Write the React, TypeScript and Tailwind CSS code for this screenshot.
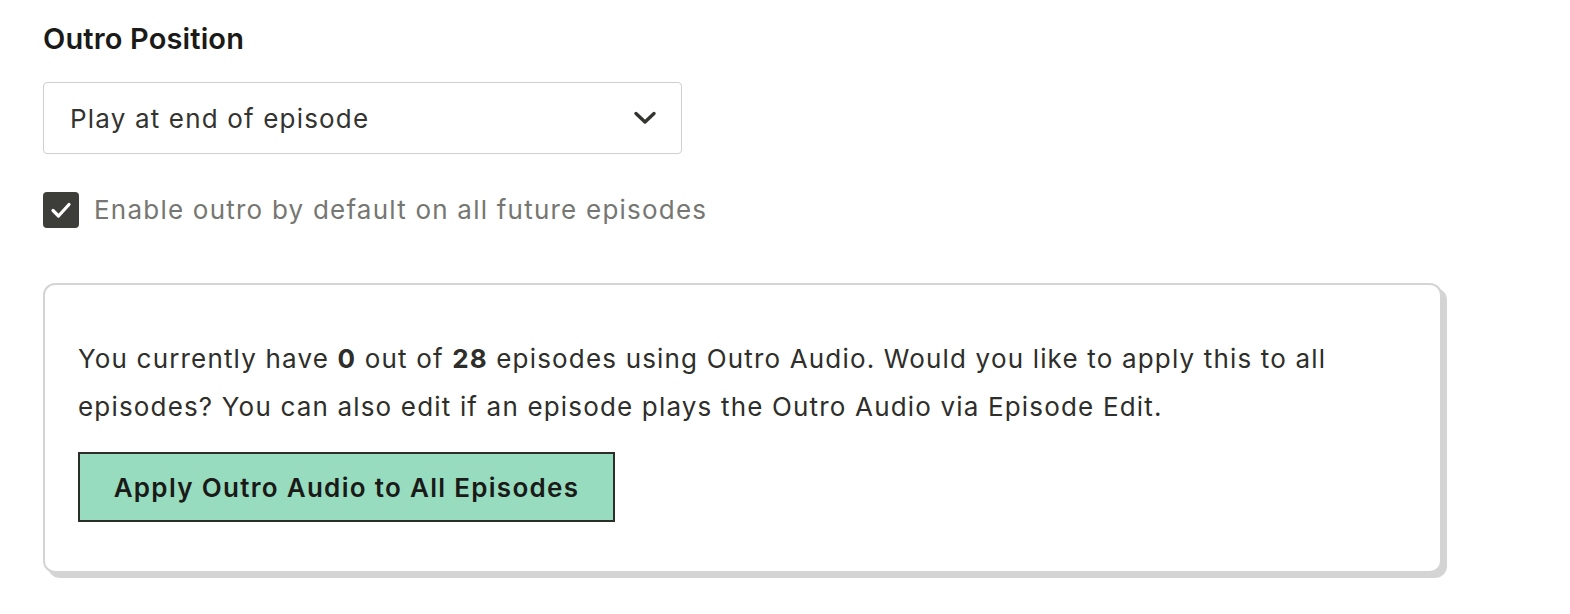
import React from "react";

export default function App() {
  return (
    <div
      className="w-[1570px] h-[614px] bg-white pl-[43px] pt-[21px] text-[#2e2e2b]"
      style={{ fontFamily: 'Inter, "Liberation Sans", Arial, sans-serif' }}
    >
      <h2 className="text-[29px] font-semibold leading-[36px] text-[#1a1a18] tracking-[0.005em]">Outro Position</h2>

      <div className="mt-[25px] w-[639px] h-[72px] border border-[#cfcfcf] rounded-[4px] flex items-center justify-between pl-[26px] pr-[24px]">
        <span className="text-[26px] text-[#333330] tracking-[0.045em]">Play at end of episode</span>
        <svg width="24" height="16" viewBox="0 0 24 16" fill="none">
          <path d="M3 3.5 L12 12 L21 3.5" stroke="#333330" strokeWidth="3.4" strokeLinecap="round" strokeLinejoin="round" />
        </svg>
      </div>

      <label className="mt-[38px] flex items-center gap-[15px] h-[36px]">
        <span className="w-[36px] h-[36px] rounded-[4px] bg-[#3d3d39] flex items-center justify-center">
          <svg width="22" height="18" viewBox="0 0 22 18" fill="none">
            <path d="M3 9.5 L8.5 15 L19 3.5" stroke="#ffffff" strokeWidth="3.2" strokeLinecap="round" strokeLinejoin="round" />
          </svg>
        </span>
        <span className="text-[26px] leading-[36px] text-[#767672] tracking-[0.047em]">Enable outro by default on all future episodes</span>
      </label>

      <div className="mt-[55px] w-[1399px] h-[290px] border-2 border-[#d4d4d4] rounded-[12px] shadow-[5px_5px_0_#d4d4d4] bg-white pl-[33px] pt-[50px]">
        <p className="text-[26px] leading-[48px] text-[#2e2e2b] w-[1300px] tracking-[0.045em]">
          You currently have <b className="font-bold">0</b> out of <b className="font-bold">28</b> episodes using Outro Audio. Would you like to apply this to all episodes? You can also edit if an episode plays the Outro Audio via Episode Edit.
        </p>
        <button className="mt-[21px] w-[537px] h-[70px] bg-[#98dcbf] border-2 border-[#2d2d2a] text-[26px] font-semibold text-[#1a1a18] flex items-center justify-center tracking-[0.05em]">
          Apply Outro Audio to All Episodes
        </button>
      </div>
    </div>
  );
}
